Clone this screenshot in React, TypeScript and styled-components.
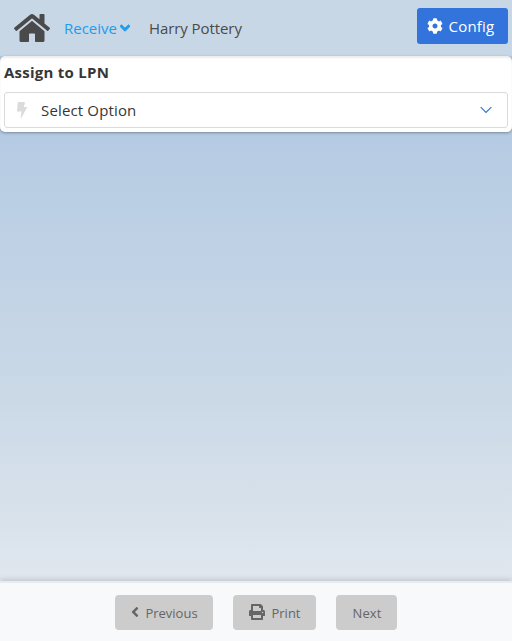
import React from 'react';
import styled, { createGlobalStyle } from 'styled-components';
import { FaAngleDown, FaAngleLeft, FaCog } from 'react-icons/fa';

const GlobalStyle = createGlobalStyle`
  *, *::before, *::after { box-sizing: border-box; }
  html, body { margin: 0; overflow: hidden; }
  body { font-family: "Open Sans", "Noto Sans", sans-serif; font-size: 15px; color: #363636; }
  button { font-family: inherit; border: 0; padding: 0; margin: 0; }
  svg { display: block; flex: none; }
`;

const Page = styled.div`
  height: 641px;
  display: flex;
  flex-direction: column;
  background: linear-gradient(#b0c7e1 0, #b5cbe3 132px, #cbd9e7 400px, #e0e7ee 582px);
`;

const Header = styled.header`
  height: 56px;
  flex: none;
  display: flex;
  align-items: center;
  padding: 0 4px 0 14px;
  background: #c8d7e6;
  color: #4a4a4a;
`;

const ReceiveLink = styled.a`
  display: flex;
  align-items: center;
  gap: 3px;
  margin-left: 14px;
  color: #209cee;
`;

const Label = styled.span<{ $width: number; $size?: number; $spacing?: number; $bold?: boolean }>`
  display: block;
  width: ${p => p.$width}px;
  font-size: ${p => p.$size ?? 15}px;
  letter-spacing: ${p => p.$spacing ?? 0}px;
  font-weight: ${p => (p.$bold ? 700 : 400)};
  line-height: 24px;
  white-space: nowrap;
`;

const UserName = styled.div`
  margin-left: 19px;
`;

const ConfigButton = styled.button`
  display: flex;
  align-items: center;
  width: 91px;
  height: 36px;
  margin: -4px 0 0 auto;
  padding-left: 10px;
  gap: 5px;
  border-radius: 3px;
  background: #3273dc;
  color: #fff;
`;

const Card = styled.section`
  height: 76px;
  flex: none;
  padding: 4px 4px 0;
  border-radius: 5px;
  background: #fff;
  box-shadow: 0 1px 3px rgba(10, 10, 10, 0.35), inset 0 2px 2px rgba(10, 10, 10, 0.07);
`;

const Select = styled.div`
  display: flex;
  align-items: center;
  height: 36px;
  margin-top: 8px;
  padding: 0 15px 0 12px;
  border: 1px solid #dbdbdb;
  border-radius: 3px;
`;

const Placeholder = styled.div`
  flex: 1;
  margin-left: 14px;
`;

const Content = styled.main`
  flex: 1;
`;

const Footer = styled.footer`
  height: 60px;
  flex: none;
  display: flex;
  justify-content: center;
  gap: 20px;
  padding-top: 12px;
  border-top: 2px solid #e8ecf0;
  background: #f8f9fb;
  box-shadow: 0 -1px 6px rgba(10, 10, 10, 0.18);
`;

const FooterButton = styled.button<{ $width: number }>`
  display: flex;
  align-items: center;
  gap: 6px;
  width: ${p => p.$width}px;
  height: 35px;
  padding-left: 16px;
  border-radius: 4px;
  background: #ccc;
  color: #666;
`;

const DownArrow = styled(FaAngleDown)`
  width: 10px;
  height: 16px;
  stroke: currentColor;
  stroke-width: 18px;
`;

const LeftArrow = styled(FaAngleLeft)`
  width: 8px;
  height: 16px;
  margin-top: -2px;
`;

const BoltIcon = () => (
  <svg width="10" height="16" viewBox="0 0 10 16" fill="#dbdbdb">
    <path d="M1.2 0h6.2q.6 0 .5.6L6.9 5h2.6q.7 0 .4.7L4.6 15.6q-.5.6-1 .1l1-6.2H.5Q0 9.500 0 9L.7.500Q.8 0 1.200 0z" />
  </svg>
);

const ChevronIcon = () => (
  <svg width="12" height="8" viewBox="0 0 12 8" fill="none" stroke="#3273dc" strokeWidth="1.2">
    <path d="M.7 1.2 6 6.5l5.3-5.3" />
  </svg>
);

const HomeIcon = () => (
  <svg width="36" height="32" viewBox="0 0 576 512" fill="currentColor">
    <path d="M488 312.7V456c0 13.3-10.7 24-24 24H348c-6.6 0-12-5.4-12-12V356c0-6.6-5.4-12-12-12h-72c-6.6 0-12 5.4-12 12v112c0 6.6-5.4 12-12 12H112c-13.3 0-24-10.7-24-24V312.7c0-3.6 1.6-7 4.4-9.3l188-154.8c4.4-3.6 10.8-3.6 15.3 0l188 154.8c2.7 2.3 4.3 5.7 4.3 9.3zm83.6-60.9L488 182.9V44.4c0-6.6-5.4-12-12-12h-56c-6.6 0-12 5.4-12 12V117l-89.5-73.7c-17.7-14.6-43.3-14.6-61 0L4.4 251.8c-5.1 4.2-5.8 11.8-1.6 16.9l25.5 31c4.2 5.1 11.8 5.8 16.9 1.6l235.2-193.7c4.4-3.6 10.8-3.6 15.3 0l235.2 193.7c5.1 4.2 12.7 3.5 16.9-1.6l25.5-31c4.2-5.2 3.4-12.7-1.7-16.9z" />
  </svg>
);

const PrinterGlyph = styled.svg`
  margin-top: -2px;
`;

const PrinterIcon = () => (
  <PrinterGlyph width="16" height="16" viewBox="0 0 512 512" fill="currentColor">
    <path d="M464 192h-16V81.941a24 24 0 0 0-7.029-16.97L383.029 7.029A24 24 0 0 0 366.059 0H88a24 24 0 0 0-24 24v168H48c-26.51 0-48 21.49-48 48v132c0 6.627 5.373 12 12 12h52v104a24 24 0 0 0 24 24h336a24 24 0 0 0 24-24V384h52c6.627 0 12-5.373 12-12V240c0-26.51-21.49-48-48-48zm-80 256H128v-96h256v96zM128 224V64h192v40a24 24 0 0 0 24 24h40v96H128zm304 72c-13.254 0-24-10.746-24-24s10.746-24 24-24 24 10.746 24 24-10.746 24-24 24z" />
  </PrinterGlyph>
);

export default function App() {
  return (
    <>
      <GlobalStyle />
      <Page>
        <Header>
          <HomeIcon />
          <ReceiveLink>
            <Label $width={53}>Receive</Label>
            <DownArrow />
          </ReceiveLink>
          <UserName><Label $width={94} $spacing={-0.08}>Harry Pottery</Label></UserName>
          <ConfigButton>
            <FaCog size={16} />
            <Label $width={47} $spacing={0.2}>Config</Label>
          </ConfigButton>
        </Header>
        <Card>
          <Label $width={106} $bold $spacing={0.25}>Assign to LPN</Label>
          <Select>
            <BoltIcon />
            <Placeholder><Label $width={97} $spacing={0.15}>Select Option</Label></Placeholder>
            <ChevronIcon />
          </Select>
        </Card>
        <Content />
        <Footer>
          <FooterButton $width={98}>
            <LeftArrow />
            <Label $width={53} $size={13}>Previous</Label>
          </FooterButton>
          <FooterButton $width={83}>
            <PrinterIcon />
            <Label $width={30} $size={13}>Print</Label>
          </FooterButton>
          <FooterButton $width={61}>
            <Label $width={30} $size={13} $spacing={0.1}>Next</Label>
          </FooterButton>
        </Footer>
      </Page>
    </>
  );
}
